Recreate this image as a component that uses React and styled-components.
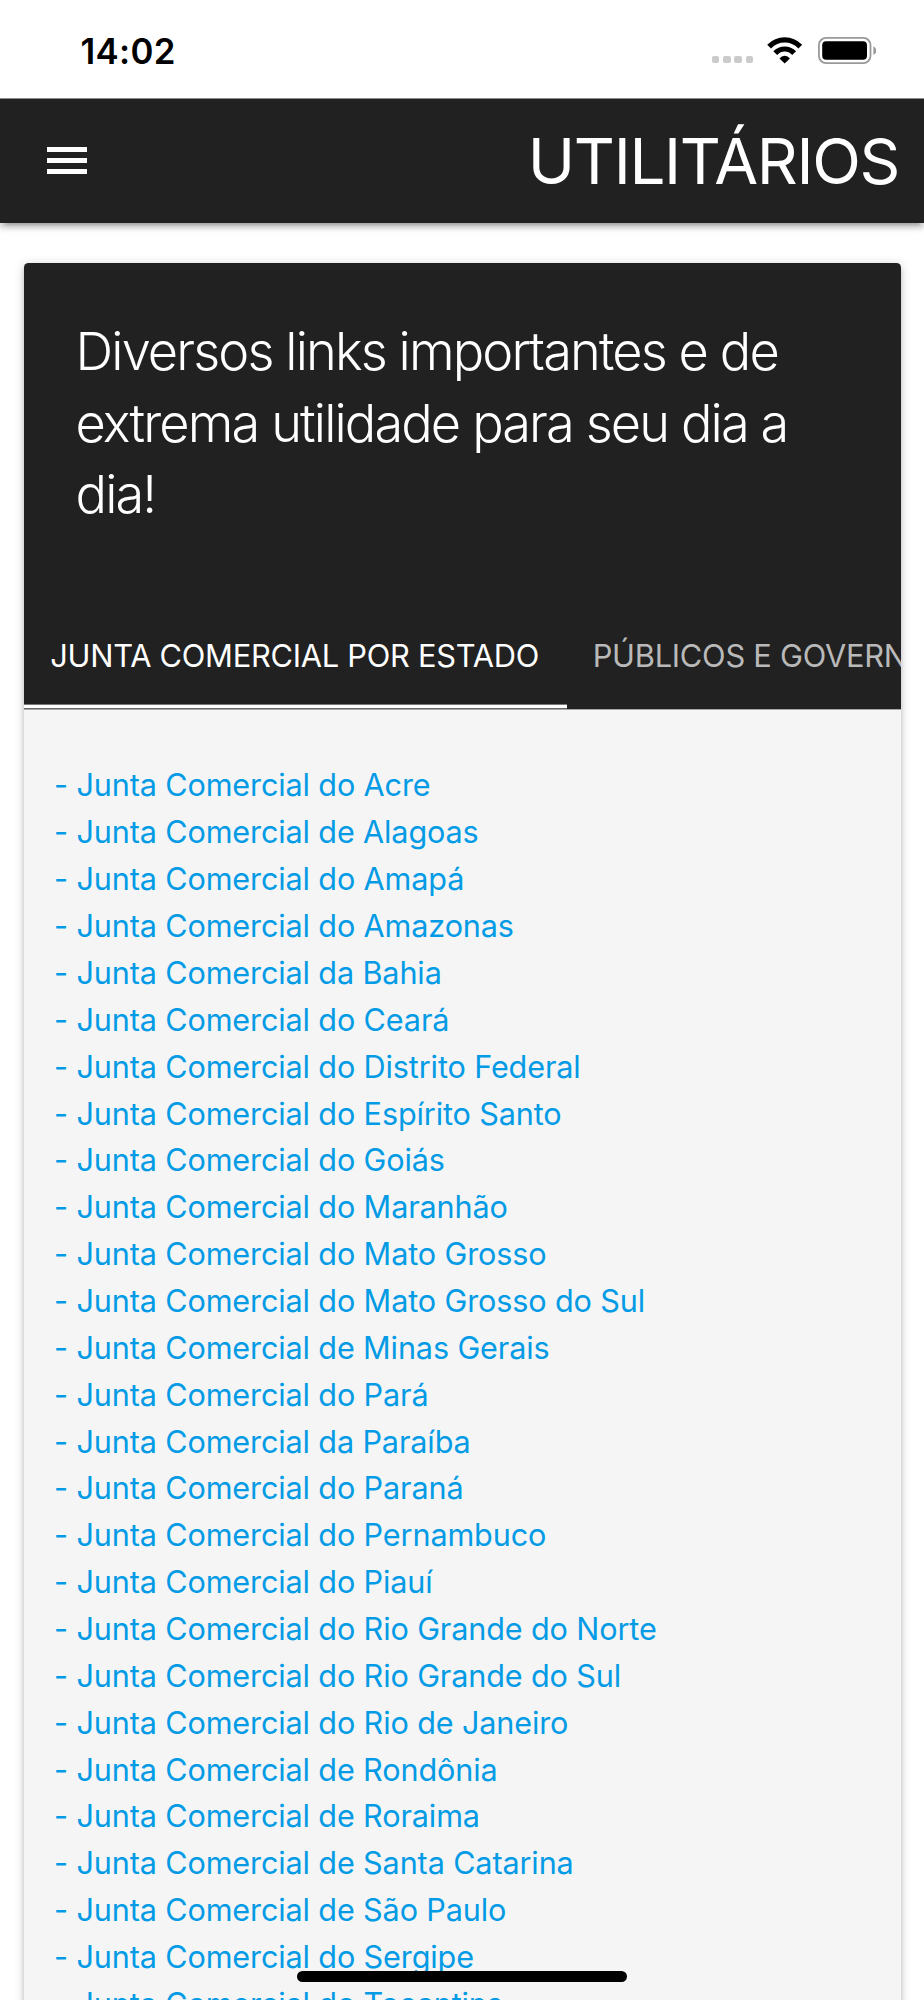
import React from 'react';
import styled, { createGlobalStyle } from 'styled-components';

const GlobalStyle = createGlobalStyle`
  * {
    box-sizing: border-box;
  }

  body {
    margin: 0;
    background: #fff;
    font-family: Inter, 'Liberation Sans', sans-serif;
  }
`;

const Screen = styled.div`
  display: flex;
  flex-direction: column;
  width: 924px;
  height: 2000px;
  overflow: hidden;
`;

const StatusBar = styled.div`
  display: flex;
  flex: none;
  justify-content: space-between;
  height: 98.4px;
  padding: 36px 48px 0 80.5px;
`;

const Clock = styled.span`
  font-size: 34.8px;
  font-weight: 600;
  line-height: 30px;
  letter-spacing: 0.3px;
`;

const StatusIcons = styled.div`
  display: flex;
  align-items: flex-start;
`;

const Signal = styled.div`
  display: flex;
  gap: 3.7px;
  margin: 20px 14.3px 0 0;
`;

const SignalDot = styled.i`
  width: 7.5px;
  height: 7.3px;
  border-radius: 2px;
  background: #cbcbcb;
`;

const WifiIcon = styled.svg`
  width: 36px;
  height: 27px;
  margin: 0.6px 14.2px 0 0;
`;

const BatteryIcon = styled.svg`
  width: 58.5px;
  height: 27px;
  margin-top: 0.6px;
`;

const NavBar = styled.nav`
  display: flex;
  flex: none;
  align-items: center;
  justify-content: space-between;
  height: 124.8px;
  padding: 0 25px 0 47px;
  background: #212121;
  color: #fff;
  box-shadow: 0 4.5px 4.5px 0 rgba(0, 0, 0, 0.14),
    0 7px 2.2px -4.5px rgba(0, 0, 0, 0.12), 0 2.2px 11px 0 rgba(0, 0, 0, 0.2);
  clip-path: inset(0 0 -24px 0);
`;

const MenuButton = styled.button`
  display: flex;
  flex-direction: column;
  gap: 6px;
  padding: 0;
  border: 0;
  background: none;
`;

const MenuLine = styled.span`
  width: 40.4px;
  height: 5.1px;
  background: #fff;
`;

const PageTitle = styled.h1`
  margin: 0;
  font-size: 63.7px;
  font-weight: 400;
  line-height: 124px;
  letter-spacing: -1.35px;
`;

const Card = styled.section`
  display: flex;
  flex: none;
  flex-direction: column;
  width: 876.6px;
  height: 1800px;
  margin: 39.8px 0 0 24px;
  border-radius: 4.5px;
  background: #212121;
  box-shadow: 0 4.5px 4.5px 0 rgba(0, 0, 0, 0.14),
    0 7px 2.2px -4.5px rgba(0, 0, 0, 0.12), 0 2.2px 11px 0 rgba(0, 0, 0, 0.2);
`;

const CardIntro = styled.p`
  height: 344px;
  margin: 0;
  padding: 53.4px 60px 0 51.6px;
  color: #fff;
  font-size: 52.3px;
  font-weight: 330;
  line-height: 71.4px;
  letter-spacing: -1.88px;
`;

const Tabs = styled.div`
  display: flex;
  flex: none;
  height: 103px;
  overflow: hidden;
  border-bottom: 1px solid #a8a8a8;
`;

const Tab = styled.a`
  flex: none;
  height: 101px;
  padding: 0 27.4px 0 26.2px;
  border-bottom: 3px solid ${({ $active }) => ($active ? '#fff' : 'transparent')};
  box-shadow: ${({ $active }) => ($active ? '0 1px 0 #666, inset 0 -1px 0 #777' : 'none')};
  color: ${({ $active }) => ($active ? '#fff' : '#b9b9b9')};
  font-size: 30.8px;
  line-height: 97px;
  letter-spacing: -0.25px;
  text-transform: uppercase;
  white-space: nowrap;
`;

const LinkPanel = styled.div`
  display: flex;
  flex: 1;
  flex-direction: column;
  padding: 52.5px 30px 0;
  background: #f5f5f5;
`;

const StateLink = styled.a`
  flex: none;
  color: #039be5;
  font-size: 30.6px;
  line-height: 46.86px;
  letter-spacing: -0.13px;
  white-space: nowrap;
`;

const HomeIndicator = styled.div`
  position: fixed;
  top: 1971px;
  left: 297px;
  width: 330px;
  height: 11px;
  border-radius: 6px;
  background: #000;
`;

const tabs = ['Junta Comercial por Estado', 'Públicos e Governamentais'];

const states = [
  'do Acre',
  'de Alagoas',
  'do Amapá',
  'do Amazonas',
  'da Bahia',
  'do Ceará',
  'do Distrito Federal',
  'do Espírito Santo',
  'do Goiás',
  'do Maranhão',
  'do Mato Grosso',
  'do Mato Grosso do Sul',
  'de Minas Gerais',
  'do Pará',
  'da Paraíba',
  'do Paraná',
  'do Pernambuco',
  'do Piauí',
  'do Rio Grande do Norte',
  'do Rio Grande do Sul',
  'do Rio de Janeiro',
  'de Rondônia',
  'de Roraima',
  'de Santa Catarina',
  'de São Paulo',
  'do Sergipe',
  'do Tocantins',
];

function App() {
  return (
    <>
      <GlobalStyle />
      <Screen>
        <StatusBar>
          <Clock>14:02</Clock>
          <StatusIcons>
            <Signal>
              <SignalDot />
              <SignalDot />
              <SignalDot />
              <SignalDot />
            </Signal>
            <WifiIcon viewBox="0 0 36 27">
              <path d="M0.2 7.7Q7.6 0.2 17.7 0.2T35.2 7.7L31.4 11.4Q25.5 5.5 17.7 5.5T4 11.4Z" />
              <path d="M6.3 14.3Q11 9.4 17.7 9.4T29.1 14.3L25.2 18Q22 14.6 17.7 14.6T10.2 18Z" />
              <path d="M12.5 21.4Q14.5 18.8 17.7 18.8T22.9 21.4L17.7 26.6Z" />
            </WifiIcon>
            <BatteryIcon viewBox="0 0 58.5 27">
              <rect x="0.9" y="0.9" width="51.6" height="25.2" rx="7.2" fill="none" stroke="#999" strokeWidth="1.8" />
              <rect x="4.2" y="4.3" width="44.8" height="18.5" rx="4" />
              <path d="M55.4 9.2Q58.3 10.7 58.3 13.6T55.4 18Z" fill="#999" />
            </BatteryIcon>
          </StatusIcons>
        </StatusBar>

        <NavBar>
          <MenuButton aria-label="Menu">
            <MenuLine />
            <MenuLine />
            <MenuLine />
          </MenuButton>
          <PageTitle>UTILITÁRIOS</PageTitle>
        </NavBar>

        <Card>
          <CardIntro>Diversos links importantes e de extrema utilidade para seu dia a dia!</CardIntro>
          <Tabs>
            {tabs.map((name, index) => (
              <Tab key={name} $active={index === 0}>{name}</Tab>
            ))}
          </Tabs>
          <LinkPanel>
            {states.map((state) => (
              <StateLink key={state}>- Junta Comercial {state}</StateLink>
            ))}
          </LinkPanel>
        </Card>
      </Screen>
      <HomeIndicator />
    </>
  );
}

export default App;
